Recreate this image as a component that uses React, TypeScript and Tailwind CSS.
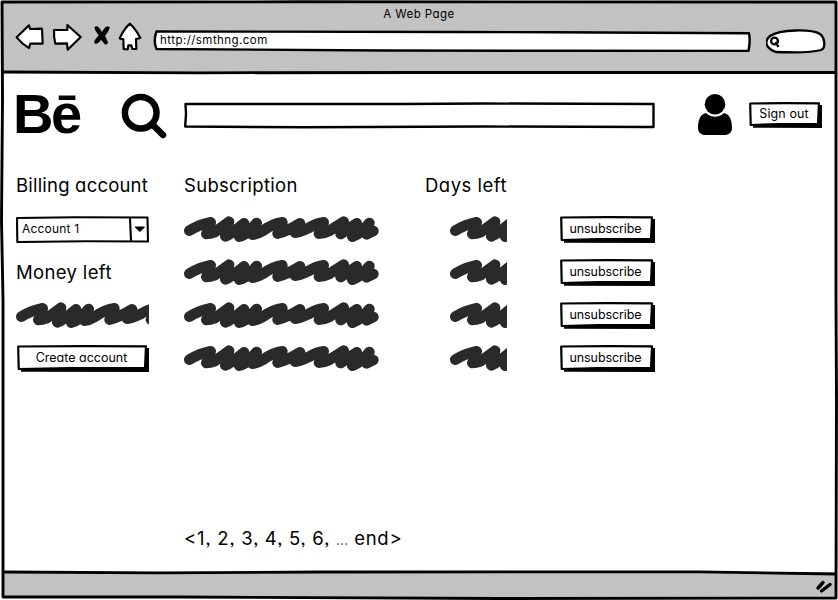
import React from "react";

const SCRIBBLE =
  "M28 77 Q60 58 92 52 Q90 66 79 87 Q90 87 104 82 L147 50 L136 94 Q150 90 192 55 L178 95 Q200 90 230 54 L218 89 Q232 88 246 79 Q280 54 307 52 Q304 66 293 86 Q320 80 360 55 L345 83 Q360 82 384 70 Q410 54 431 52 Q430 62 417 86 Q432 86 446 79 L491 50 L482 87 L530 55 L517 95 Q545 85 568 54 L560 88 L580 78";

// Solid ink between the closely spaced strokes of the scribble.
const SCRIBBLE_FILL =
  "M60 70 L94 52 L86 84 L140 62 L134 92 L186 58 L228 56 L222 90 L180 98 L130 92 Z M268 68 L308 52 L300 84 L340 62 L360 62 L352 84 Z M390 70 L430 55 L424 84 L484 62 L528 54 L566 56 L580 84 L520 98 L484 88 Z";

function Scribble({ className }: { className: string }) {
  return (
    <div className={`h-[30px] shrink-0 overflow-hidden ${className}`}>
      <svg width="200" height="30" viewBox="12 30 600 90" className="max-w-none">
        <path d={SCRIBBLE} fill="none" stroke="#2a2a2a" strokeWidth="32" strokeLinecap="round" strokeLinejoin="round" />
        <path d={SCRIBBLE_FILL} fill="#2a2a2a" />
      </svg>
    </div>
  );
}

function SketchButton({ width, height, className, children }: { width: number; height: number; className: string; children: React.ReactNode }) {
  const w = width;
  const h = height;
  return (
    <button className={`relative flex items-center justify-center text-[12.5px] leading-none ${className}`}>
      <svg width={w} height={h} className="absolute inset-0">
        <path d={`M4 4 L${w} 3 L${w} ${h} L4 ${h - 0.3} Z`} fill="#000" />
        <path d={`M1.2 1.5 L${w * 0.5} 1.2 L${w - 3} 1.4 L${w - 4} ${h - 4} L${w * 0.4} ${h - 3.8} L1.7 ${h - 3} Z`} fill="#fff" stroke="#000" strokeWidth="2.2" strokeLinejoin="round" />
      </svg>
      <span className="relative">{children}</span>
    </button>
  );
}

function BrowserBar() {
  return (
    <header className="relative h-[73px] bg-[#c2c2c2]">
      <h1 className="pt-[7px] text-center text-[11.5px] leading-[14px] tracking-[0.45px]">A Web Page</h1>
      <div className="flex h-[34px] items-start pl-[14px]">
        <svg width="130" height="34" viewBox="42 63 390 102" fill="#fff" stroke="#000" strokeWidth="6.5" strokeLinejoin="round" strokeLinecap="round">
          <path d="M50 112 L87 76 L90 87 L126 86 L128 131 L91 131 L87 144 Q66 132 50 112Z" />
          <path d="M162 90 L202 90 L202 75 L242 111 L203 149 L201 130 L166 131 Q161 112 162 90Z" />
          <path d="M283 82 Q291 75 298 84 L306 96 Q314 81 322 79 L330 82 Q324 99 315 107 L324 127 Q321 138 313 131 L303 119 Q294 133 285 131 Q280 128 284 121 L296 106 Q285 95 283 82Z" fill="#000" stroke="none" />
          <path d="M390 71 Q408 88 421 114 L408 117 L409 147 L397 147 L394 136 L385 136 L383 148 L371 147 L370 118 L359 115 Q372 86 390 71Z" />
        </svg>
        <div className="relative ml-[9px] mt-[9px] flex h-[22px] w-[599px] items-center pl-[7px]">
          <svg width="599" height="22" className="absolute inset-0">
            <path d="M3.5 1.5 L300 2 L400 2.2 L596 3.2 Q597.5 11 595.5 21 L400 20.8 L230 20.5 L3.5 19 Q0 11 3.5 1.5Z" fill="#fff" stroke="#000" strokeWidth="2.4" strokeLinejoin="round" />
          </svg>
          <span className="relative text-[11.5px] leading-none tracking-[0.45px]">http://smthng.com</span>
        </div>
        <svg width="64" height="28" className="ml-[14px] mt-[7px]" fill="#fff" stroke="#000" strokeWidth="2.3">
          <path d="M4 8 C14 1 46 1 54 6 C59 10 60 20 55 22 C40 26 24 24 10 24 C-1 20 -2 13 4 8Z" />
          <circle cx="8.5" cy="13" r="3.4" />
          <path d="M9.5 14 L12.5 19" />
        </svg>
      </div>
    </header>
  );
}

function SiteHeader() {
  return (
    <div className="flex h-[63px] items-center pl-[13px] pt-[20px]">
      <div className="w-[108px] -mt-[1px] font-['Liberation_Sans',Arial,sans-serif] text-[56px] font-bold leading-[44px] tracking-[-2.5px]">Bē</div>
      <svg width="46" height="46" className="mt-[2px]" fill="none" stroke="#000" strokeWidth="6.5">
        <circle cx="19.7" cy="19.7" r="15.8" />
        <path d="M31 31 L42 42" strokeLinecap="round" />
      </svg>
      <svg width="472" height="27" className="ml-[17px] mt-[2px]">
        <path d="M1.5 2 L220 2 L300 1.5 L469.5 2 L469.5 25 L300 24.5 L120 25.3 L1.2 24.5 L2 12Z" fill="#fff" stroke="#000" strokeWidth="2.4" strokeLinejoin="round" />
      </svg>
      <svg width="36" height="42" className="ml-[41px]">
        <path d="M9 19 C3 20 1 27 1 34 C1 38 4 41 8 41 L28 41 C32 41 35 38 35 34 C35 27 33 20 27 19 C22 24 14 24 9 19Z" />
        <circle cx="18" cy="10.3" r="10.3" />
      </svg>
      <SketchButton width={73} height={26} className="ml-[16px] h-[26px] w-[73px] pr-[3px] tracking-[0.1px]">Sign out</SketchButton>
    </div>
  );
}

function Heading({ className, children }: { className: string; children: React.ReactNode }) {
  return <h2 className={`h-[24px] whitespace-nowrap text-[18.5px] leading-[24px] ${className}`}>{children}</h2>;
}

function AccountPanel() {
  return (
    <aside className="w-[184px] shrink-0 pl-[16px]">
      <Heading className="tracking-[0.2px]">Billing account</Heading>
      <div className="relative mt-[19px] flex h-[27px] w-[133px] items-center pl-[6px] text-[12px] tracking-[0.2px]">
        <svg width="133" height="27" className="absolute inset-0">
          <path d="M1 2 L60 1.3 L131.5 1.5 L132 25.5 L70 25.2 L1.3 26 Z M114 2 L115 25" fill="#fff" stroke="#000" strokeWidth="2.1" strokeLinejoin="round" />
          <path d="M119 11 L128.5 11 L124 15.5Z" stroke="#000" strokeLinejoin="round" />
        </svg>
        <span className="relative -mt-[2px]">Account 1</span>
      </div>
      <Heading className="mt-[17px] tracking-[0.35px]">Money left</Heading>
      <Scribble className="mt-[17px] w-[133px]" />
      <SketchButton width={132} height={27} className="ml-px mt-[14px] h-[27px] w-[132px] pb-px pr-[3px]">Create account</SketchButton>
    </aside>
  );
}

function Subscriptions() {
  return (
    <section className="flex-1">
      <div className="flex">
        <Heading className="w-[241px] tracking-[0.3px]">Subscription</Heading>
        <Heading className="tracking-[0.5px]">Days left</Heading>
      </div>
      <div className="mt-[18px] flex flex-col gap-[13px]">
        {[1, 2, 3, 4].map((row) => (
          <div key={row} className="flex h-[30px] items-start">
            <Scribble className="w-[200px]" />
            <Scribble className="ml-[66px] w-[57px]" />
            <SketchButton width={95} height={27} className="ml-[53px] mt-px h-[27px] w-[95px] pb-px pr-[4px] tracking-[-0.1px]">unsubscribe</SketchButton>
          </div>
        ))}
      </div>
      <nav className="mt-[152px] whitespace-nowrap text-[18.5px] leading-[24px] tracking-[0.72px]">&lt;1, 2, 3, 4, 5, 6, <span className="text-[14px] tracking-[0.1px] text-[#555]">...</span> end&gt;</nav>
    </section>
  );
}

export default function App() {
  return (
    <div className="relative flex h-[600px] w-[838px] flex-col overflow-hidden bg-white font-['Inter','Noto_Sans',sans-serif] text-black [font-feature-settings:'cv11','ss03','calt'_0]">
      <BrowserBar />
      <SiteHeader />
      <main className="flex flex-1 pt-[37px]">
        <AccountPanel />
        <Subscriptions />
      </main>
      <footer className="flex h-[28px] shrink-0 items-center justify-end bg-[#c2c2c2] pr-[5px]">
        <svg width="18" height="16" stroke="#000" strokeWidth="3.4" strokeLinecap="round">
          <path d="M3 10 L8 4.500 M6.500 13 L15 6.500" />
        </svg>
      </footer>
      <svg width="838" height="600" className="pointer-events-none absolute inset-0" fill="none">
        <path d="M0 0H838V600H0Z M2 2 L836 2 L836.5 598 L3 597Z" fill="#fff" fillRule="evenodd" />
        <path d="M2 2 L300 1.8 L836 2 L836 300 L836.5 400 L836 598 L500 598.5 L180 597 L3 597 L3 300 L1.500 220 L2.500 100 Z" stroke="#000" strokeWidth="2.9" strokeLinejoin="round" />
        <path d="M3 72 L200 72.8 L420 72.5 L560 72.5 L836 72.5" stroke="#000" strokeWidth="2.8" />
        <path d="M3 572 L160 572.8 L320 572 L700 571.8 L836 574" stroke="#000" strokeWidth="2.8" />
      </svg>
    </div>
  );
}
